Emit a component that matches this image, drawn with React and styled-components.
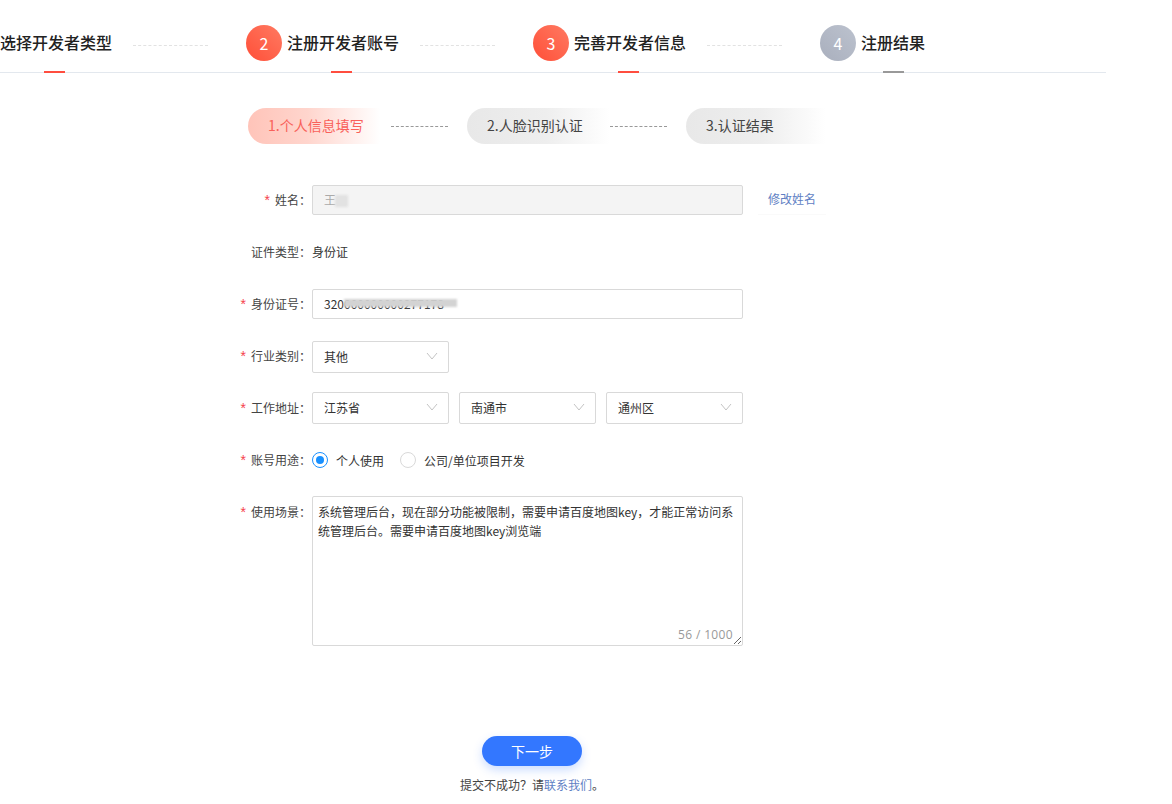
import React from 'react';
import styled, { createGlobalStyle } from 'styled-components';

const GlobalStyle = createGlobalStyle`
    html, body {
        margin: 0;
        padding: 0;
        background: #fff;
        overflow: hidden;
    }
    body {
        font-family: "Noto Sans CJK SC", "Liberation Sans", sans-serif;
        color: #333;
    }
    * { box-sizing: border-box; }
`;

const Page = styled.div`
    width: 1172px;
    height: 804px;
    overflow: hidden;
`;

/* top steps */
const Header = styled.div`
    display: flex;
    align-items: center;
    width: 1106px;
    height: 73px;
    padding-top: 14px;
    border-bottom: 1px solid #e3e8ee;
`;

const Step = styled.div`
    display: flex;
    align-items: center;
    gap: 5px;
`;

const Circle = styled.div`
    width: 36px;
    height: 36px;
    border-radius: 50%;
    display: flex;
    align-items: center;
    justify-content: center;
    color: #fff;
    font-size: 16px;
    background: ${p => p.$off
        ? 'linear-gradient(45deg, #a9afbd, #bcc2ce)'
        : 'linear-gradient(45deg, #ff4f38, #ff7a62)'};
`;

const StepName = styled.div`
    position: relative;
    font-size: 16px;
    font-weight: 500;
    line-height: 56px;
    height: 58px;
    color: #222;
    &::after {
        content: '';
        position: absolute;
        left: 50%;
        bottom: -1px;
        width: 21px;
        height: 2px;
        margin-left: ${p => p.$off ? -10 : -12}px;
        background: ${p => p.$off ? '#999' : '#ff4d3f'};
    }
`;

const StepLine = styled.div`
    width: 75px;
    margin: 4px 38px 0 21px;
    border-top: 1px dashed #e2e2e2;
`;

/* sub tabs */
const Tabs = styled.div`
    display: flex;
    align-items: center;
    margin: 35px 0 0 248px;
`;

const Tab = styled.div`
    width: ${p => p.$w}px;
    height: 36px;
    padding-left: 20px;
    border-radius: 18px 0 0 18px;
    line-height: 35px;
    font-size: 14px;
    color: ${p => p.$active ? '#f9615a' : '#444'};
    background: ${p => p.$active
        ? 'linear-gradient(90deg, #ffc4b9 0%, #ffd5cd 45%, #fff 100%)'
        : 'linear-gradient(90deg, #e8e8e8 0%, #eeeeee 55%, #fff 100%)'};
`;

const TabLine = styled.div`
    width: 57px;
    margin: 0 19px 0 ${p => p.$left}px;
    border-top: 1px dashed #999;
`;

/* form */
const Form = styled.div`
    margin-top: 41px;
    padding-left: 232px;
`;

const Row = styled.div`
    display: flex;
    align-items: ${p => p.$top ? 'flex-start' : 'center'};
    height: ${p => p.$h}px;
    margin-bottom: ${p => p.$mb}px;
`;

const Label = styled.div`
    width: 79px;
    flex: none;
    margin-right: 1px;
    margin-top: ${p => p.$mt || 0}px;
    text-align: right;
    font-size: 12px;
    line-height: 30px;
    color: #444;
`;

const Star = styled.span`
    font-family: "Liberation Sans", sans-serif;
    font-size: 14px;
    color: #f5414d;
    margin-right: 5px;
`;

const Field = styled.div`
    position: relative;
    width: ${p => p.$w || 431}px;
    height: 100%;
    flex: none;
    padding-left: 11px;
    border: 1px solid #d9d9d9;
    border-radius: 2px;
    font-size: 12px;
    line-height: 28px;
    color: ${p => p.$muted ? '#aaa' : '#333'};
    background: ${p => p.$muted ? '#f4f4f4' : '#fff'};
`;

const Mask = styled.span`
    position: absolute;
    left: ${p => p.$x}px;
    top: ${p => p.$y}px;
    width: ${p => p.$w}px;
    height: ${p => p.$h}px;
    background: ${p => p.$c};
    filter: blur(1px);
`;

const ModifyLink = styled.div`
    width: 68px;
    height: 30px;
    margin-left: 15px;
    text-align: center;
    font-size: 12px;
    line-height: 28px;
    color: #5f7fc4;
    border-bottom: 1px solid #fafafa;
`;

const PlainText = styled.div`
    font-size: 12px;
    color: #333;
    margin-bottom: 1px;
`;

const SelectBox = styled(Field)`
    width: 137px;
    line-height: 30px;
    margin-right: 10px;
    svg {
        position: absolute;
        right: 10px;
        top: 8px;
    }
`;

const Radio = styled.span`
    width: 16px;
    height: 16px;
    flex: none;
    border-radius: 50%;
    border: 1px solid ${p => p.$on ? '#1890ff' : '#d9d9d9'};
    display: flex;
    align-items: center;
    justify-content: center;
    &::after {
        content: '';
        width: 8px;
        height: 8px;
        border-radius: 50%;
        background: ${p => p.$on ? '#1890ff' : 'transparent'};
    }
`;

const RadioText = styled.span`
    font-size: 12px;
    color: #333;
    margin: 0 16px 0 8px;
`;

const AreaWrap = styled.div`
    position: relative;
    width: 431px;
    height: 150px;
`;

const Area = styled.textarea`
    display: block;
    width: 100%;
    height: 100%;
    padding: 5px;
    border: 1px solid #d9d9d9;
    border-radius: 2px;
    outline: none;
    resize: vertical;
    overflow: hidden;
    font-family: inherit;
    font-size: 12px;
    line-height: 19px;
    color: #333;
`;

const Counter = styled.span`
    position: absolute;
    right: 10px;
    bottom: 3px;
    font-family: "Open Sans", sans-serif;
    font-size: 12px;
    letter-spacing: .35px;
    color: #999;
`;

const Bottom = styled.div`
    width: 1064px;
    margin-top: 90px;
    display: flex;
    flex-direction: column;
    align-items: center;
`;

const NextButton = styled.button`
    width: 100px;
    height: 30px;
    border: 0;
    border-radius: 15px;
    background: #3377ff;
    box-shadow: 0 4px 10px rgba(51, 119, 255, .25);
    color: #fff;
    font-family: inherit;
    font-size: 14px;
`;

const Help = styled.div`
    margin-top: 10px;
    font-size: 12px;
    color: #444;
    a {
        color: #5f7fc4;
        text-decoration: none;
    }
`;

const Chevron = () => (
    <svg width="12" height="12" viewBox="0 0 12 12" fill="none" stroke="#c4c4c4" strokeWidth="1">
        <path d="M1 3 L6 9 L11 3" />
    </svg>
);

const Select = ({ children, w }) => (
    <SelectBox $w={w}>
        {children}
        <Chevron />
    </SelectBox>
);

const App = () => {
    return (
        <Page>
            <GlobalStyle />
            <Header>
                <Step><StepName>选择开发者类型</StepName></Step>
                <StepLine />
                <Step><Circle>2</Circle><StepName>注册开发者账号</StepName></Step>
                <StepLine />
                <Step><Circle>3</Circle><StepName>完善开发者信息</StepName></Step>
                <StepLine />
                <Step><Circle $off>4</Circle><StepName $off>注册结果</StepName></Step>
            </Header>

            <Tabs>
                <Tab $active $w={132}>1.个人信息填写</Tab>
                <TabLine $left={11} />
                <Tab $w={143}>2.人脸识别认证</Tab>
                <TabLine $left={0} />
                <Tab $w={140}>3.认证结果</Tab>
            </Tabs>

            <Form>
                <Row $h={30} $mb={22}>
                    <Label><Star>*</Star>姓名：</Label>
                    <Field $muted>
                        王
                        <Mask $x={22} $y={9} $w={13} $h={12} $c="#e2e2e2" />
                    </Field>
                    <ModifyLink>修改姓名</ModifyLink>
                </Row>
                <Row $h={30} $mb={22}>
                    <Label>证件类型：</Label>
                    <PlainText>身份证</PlainText>
                </Row>
                <Row $h={30} $mb={22}>
                    <Label><Star>*</Star>身份证号：</Label>
                    <Field>
                        320000000000277178
                        <Mask $x={31} $y={9} $w={113} $h={8} $c="#d3d3d3" />
                    </Field>
                </Row>
                <Row $h={32} $mb={19}>
                    <Label $mt={-2}><Star>*</Star>行业类别：</Label>
                    <Select>其他</Select>
                </Row>
                <Row $h={32} $mb={20}>
                    <Label><Star>*</Star>工作地址：</Label>
                    <Select>江苏省</Select>
                    <Select>南通市</Select>
                    <Select>通州区</Select>
                </Row>
                <Row $h={32} $mb={20}>
                    <Label><Star>*</Star>账号用途：</Label>
                    <Radio $on />
                    <RadioText>个人使用</RadioText>
                    <Radio />
                    <RadioText>公司/单位项目开发</RadioText>
                </Row>
                <Row $h={150} $mb={0} $top>
                    <Label $mt={1}><Star>*</Star>使用场景：</Label>
                    <AreaWrap>
                        <Area readOnly defaultValue="系统管理后台，现在部分功能被限制，需要申请百度地图key，才能正常访问系统管理后台。需要申请百度地图key浏览端" />
                        <Counter>56 / 1000</Counter>
                    </AreaWrap>
                </Row>
            </Form>

            <Bottom>
                <NextButton>下一步</NextButton>
                <Help>提交不成功？请<a href="#contact">联系我们</a>。</Help>
            </Bottom>
        </Page>
    );
};

export default App;
